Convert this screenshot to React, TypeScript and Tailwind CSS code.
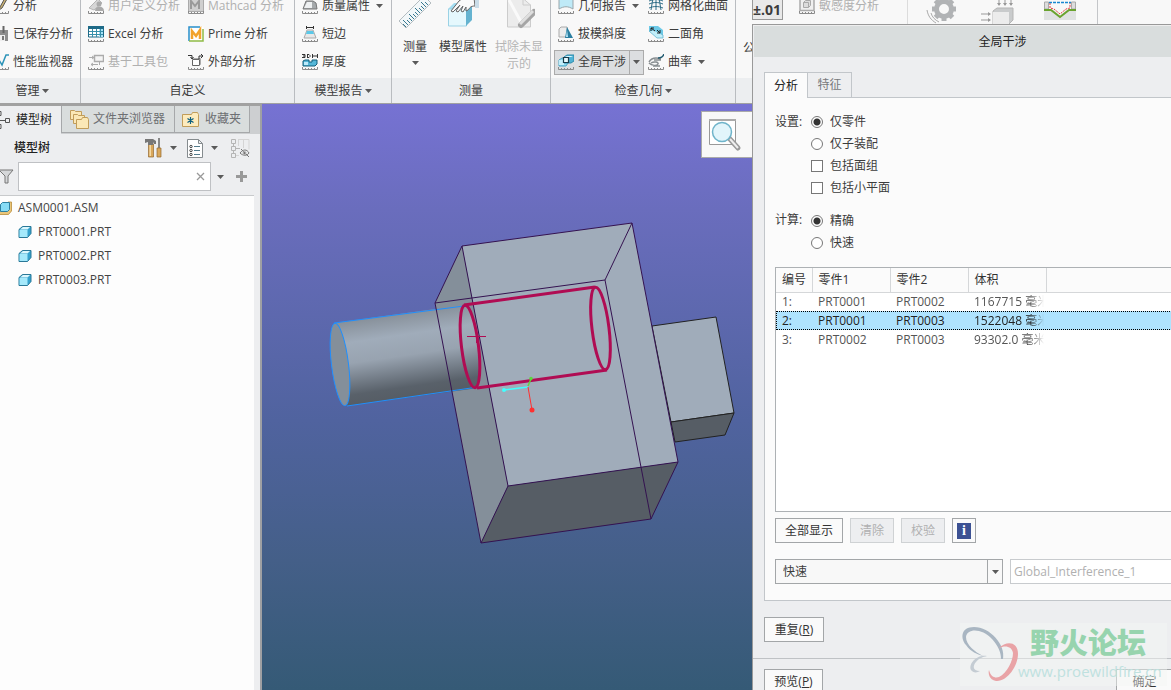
import type { ReactNode } from 'react'

type IconProps = { children: ReactNode; ruler?: boolean }

// 16x16 功能区图标，底部可带刻度尺
function RibbonIcon({ children, ruler = true }: IconProps) {
  return (
    <svg width="16" height="16" viewBox="0 0 16 16" fill="none" className="shrink-0">
      {children}
      {ruler && <path d="M.5 13v2.500h15V13M3.500 14v1M6.500 14v1M9.500 14v1M12.500 14v1" stroke="#8b8b8b" />}
    </svg>
  )
}

function Caret() {
  return (
    <svg width="7" height="4" viewBox="0 0 7 4" className="shrink-0"><path d="M0 0h7L3.500 4z" fill="#5a5a5a" /></svg>
  )
}

const icons = {
  run: <RibbonIcon><path d="M12 0L7 9l-1 3 3-2 5-9z" fill="#c8b070" stroke="#555" /></RibbonIcon>,
  saved: <RibbonIcon ruler={false}><path d="M1 4h14v11H1z" fill="#8d8d8d" /><path d="M4.500 0v7M10.500 0v7" stroke="#666" strokeWidth="2" /><path d="M5 9h7v6H5z" fill="#eee" /><path d="M9 10h2v4H9z" fill="#777" /></RibbonIcon>,
  monitor: <RibbonIcon><path d="M3 6h3l3 5 4-10h3" stroke="#2c93b8" strokeWidth="1.500" /></RibbonIcon>,
  user: <RibbonIcon><path d="M1 10L10 1l4 4-8 7z" fill="#d6d6d6" stroke="#b5b5b5" /><circle cx="11" cy="6" r="2.500" fill="#aaa" /><path d="M7 13c0-6 9-6 9 0z" fill="#aaa" /></RibbonIcon>,
  excel: <RibbonIcon><path d="M.5 1h15v10H.5z" fill="#fff" stroke="#1e6a87" /><path d="M0 0h16v3H0z" fill="#1e6a87" /><path d="M11 3h4v8h-4z" fill="#a8e2f6" /><path d="M4.500 3v8M8.500 3v8M12.500 3v8M1 5.500h14M1 8.500h14" stroke="#368faa" /></RibbonIcon>,
  toolkit: <RibbonIcon><path d="M6.500 1.500h9v6h-9z" fill="#f4f4f4" stroke="#ababab" strokeWidth="1.500" /><path d="M1 3.500h5M4 2l2 1.500L4 5M10 10.500H3M5 9l-2 1.500L5 12M11.500 8v3" stroke="#ababab" /></RibbonIcon>,
  mathcad: <RibbonIcon><path d="M.5.5h15v13H.5z" fill="#cfcfcf" stroke="#aaa" /><path d="M3 11V3l4 5 4-5v8" stroke="#999" strokeWidth="2" /></RibbonIcon>,
  prime: <RibbonIcon ruler={false}><path d="M.5.5h15v15H.5z" fill="#fff" /><path d="M1 15V1h11" stroke="#278fca" strokeWidth="1.500" /><path d="M1 15h14V3" stroke="#8fba46" strokeWidth="1.500" /><path d="M4 13V5l4 5 4-6v9" stroke="#f2a32c" strokeWidth="2.500" /></RibbonIcon>,
  external: <RibbonIcon><path d="M4.500 5.500h7v6h-7z" fill="#fff" stroke="#666" /><path d="M4.500 5.500l1-1h7v6l-1 1" stroke="#aaa" /><path d="M0 1.500h4v3M2.500 3l1.500 2 1.500-2M11 5V2h4M13 0l2 2-2 2" stroke="#333" /></RibbonIcon>,
  mass: <RibbonIcon><path d="M1 11L4 3h7l3 2 1 6z" fill="#a5a9ab" stroke="#777" /><path d="M2 10l3-6h5v6z" fill="#eef0f1" /></RibbonIcon>,
  edge: <RibbonIcon><path d="M5 4h6l3 8H2z" fill="#e8e8e8" stroke="#aaa" /><path d="M5 5h6l1 3H4z" fill="#5bc8e8" /><path d="M4.500 0v3M11.500 0v3M4 1.500h8" stroke="#333" /></RibbonIcon>,
  thickness: <RibbonIcon><path d="M1 7l2-1h4v2h3V6h5v4l-2 2H1z" fill="#55b7d8" stroke="#155e7a" /><path d="M2 8h4v3H2z" fill="#bdeafa" /><path d="M0 .5h3v3H0M1 2h2M5.500 0v4M5 .5h2l1 1v1l-1 1H5M10.500 0v4M15.500 0v4M10 2h5" stroke="#333" /></RibbonIcon>,
  geom: <RibbonIcon><path d="M1 0h14v11c-5-3-9-3-14 0z" fill="#bfeaf7" stroke="#9aa6ab" /></RibbonIcon>,
  draft: <RibbonIcon><path d="M1 11V3l2-2h6l1 10z" fill="#ececec" stroke="#aaa" /><path d="M9 1l6 11H7z" fill="#2a7ea0" /><path d="M9 4l1 7H8z" fill="#bdeafa" /></RibbonIcon>,
  interfere: <RibbonIcon><path d="M1 6l3-2h6v5l-2 3H1z" fill="#8cd8f0" stroke="#4aa6c6" /><path d="M6 3l3-2h7v6l-3 2H6z" fill="#4fb2d5" stroke="#2f8bab" /><path d="M7 3l2-1h6l-2 1z" fill="#d8f5fd" /><path d="M1 6h5v5H1z" fill="#c4eefa" /><path d="M5.500 3.500h5v5h-5z" fill="#e9fafe" stroke="#173a49" strokeWidth="1.200" /></RibbonIcon>,
  mesh: <RibbonIcon><path d="M1 3c5-2 9-2 14 0M1 6c5-2 9-2 14 0M1 10c5-2 9-2 14 0M5 0c-1 4-1 8-2 12M8 0v12M11 0c1 4 1 8 2 12" stroke="#2f6d87" /></RibbonIcon>,
  dihedral: <RibbonIcon><path d="M1 0h9l5 4v8l-5-6-9-1z" fill="#6cc9e7" /><path d="M1 5l5-1 9 5v3H9z" fill="#c2eef9" stroke="#55aeca" strokeWidth=".7" /><path d="M3 5V2h3M3 2l4 3M9 4l3 3V4M12 7H9" stroke="#222" /></RibbonIcon>,
  curvature: <RibbonIcon><path d="M1 8c3-5 9-4 12-3M1 9c3 3 8 3 9 1s-4-3-7-1M6 6h7M5 12h7" stroke="#878d90" strokeWidth="1.500" /><path d="M10 4c3 0 5-1 6-4" stroke="#205a70" strokeWidth="1.500" /></RibbonIcon>,
  sense: <RibbonIcon><path d="M1 .5h14v12H1z" fill="#f0f0f0" stroke="#aaa" strokeWidth="1.500" /><path d="M4.500 4.500h5v5h-5zM4.500 4.500l2-2h5v5l-2 2" fill="#ddd" stroke="#aaa" /></RibbonIcon>,
}

type ItemProps = { icon: ReactNode; label: string; disabled?: boolean; caret?: boolean }

function Item({ icon, label, disabled, caret }: ItemProps) {
  return (
    <button disabled={disabled} className="flex h-7 items-center gap-1 whitespace-nowrap text-[#3c3c3c] disabled:text-[#b0b0b0]">
      {icon}
      <span>{label}</span>
      {caret && <span className="ml-0.5"><Caret /></span>}
    </button>
  )
}

function Group({ title, caret, className, children }: { title: string; caret?: boolean; className: string; children: ReactNode }) {
  return (
    <section className={`flex shrink-0 flex-col border-r border-[#b9bcc0] ${className}`}>
      <div className="flex h-[78px] items-end overflow-hidden bg-[#f8f8f8] pb-0.5">{children}</div>
      <h2 className="flex flex-1 items-center justify-center gap-0.5 bg-[#eceef0]">
        {title}
        {caret && <Caret />}
      </h2>
    </section>
  )
}

function BigButton({ icon, lines, disabled, caret }: { icon: ReactNode; lines: string[]; disabled?: boolean; caret?: boolean }) {
  return (
    <button disabled={disabled} className="flex h-[76px] flex-col items-center whitespace-nowrap leading-[17px] disabled:text-[#b5b5b5]">
      {icon}
      <span className="mt-1.5">{lines[0]}</span>
      {lines[1] && <span>{lines[1]}</span>}
      {caret && <span className="mt-1.5"><Caret /></span>}
    </button>
  )
}

function Ribbon() {
  return (
    <header className="flex h-[104px] shrink-0 overflow-hidden border-b border-[#a1a1a1] bg-[linear-gradient(#f8f8f8_78px,#eceef0_78px)]">
      <Group title="管理" caret className="w-[81px] [&>h2]:pr-4">
        <div className="-ml-[7px] flex flex-col">
          <Item icon={icons.run} label="分析" />
          <Item icon={icons.saved} label="已保存分析" />
          <Item icon={icons.monitor} label="性能监视器" />
        </div>
      </Group>
      <Group title="自定义" className="w-[214px]">
        <div className="ml-[7px] flex w-[100px] flex-col">
          <Item icon={icons.user} label="用户定义分析" disabled />
          <Item icon={icons.excel} label="Excel 分析" />
          <Item icon={icons.toolkit} label="基于工具包" disabled />
        </div>
        <div className="flex flex-col">
          <Item icon={icons.mathcad} label="Mathcad 分析" disabled />
          <Item icon={icons.prime} label="Prime 分析" />
          <Item icon={icons.external} label="外部分析" />
        </div>
      </Group>
      <Group title="模型报告" caret className="w-[97px]">
        <div className="ml-[7px] flex flex-col">
          <Item icon={icons.mass} label="质量属性" caret />
          <Item icon={icons.edge} label="短边" />
          <Item icon={icons.thickness} label="厚度" />
        </div>
      </Group>
      <Group title="测量" className="w-[159px]">
        <div className="flex gap-2 pl-[7px]">
          <BigButton
            caret
            lines={['测量']}
            icon={
              <svg width="32" height="32" viewBox="0 0 32 32" fill="none">
                <path d="M0 21L25-4l7 7L7 28z" fill="#f2f7f9" stroke="#b4bcc0" />
                <path d="M7 27l-3-3M9 25l-5-5M11 23l-3-3M13 21l-3-3M15 19l-5-5M17 17l-3-3M19 15l-3-3M21 13l-5-5M23 11l-3-3M25 9l-3-3M27 7l-5-5M29 5l-3-3" stroke="#38788f" />
              </svg>
            }
          />
          <BigButton
            lines={['模型属性']}
            icon={
              <svg width="32" height="32" viewBox="0 0 32 32" fill="none">
                <path d="M1 9l6-6h18l-7 6z" fill="#a3dcf0" />
                <path d="M1.500 9h18v17h-18z" fill="#e5f8fd" stroke="#9bd2e5" />
                <path d="M19 9l6-6v17l-6 6z" fill="#65b3d0" />
                <path d="M4 11l8-10 4-3h11l1 8c-5 0-5 2-7 4l-2 1 0-4-3 5-2-1 2-5-5 6-2-1 4-6-7 7z" fill="#fafafa" stroke="#666" />
                <path d="M28-1h4v9h-4z" fill="#c9dce8" />
              </svg>
            }
          />
          <BigButton
            disabled
            lines={['拭除未显', '示的']}
            icon={
              <svg width="32" height="32" viewBox="0 0 32 32" fill="none">
                <path d="M4.500-2h15l8 7v22h-23z" fill="#ececec" stroke="#ccc" />
                <path d="M6 0l12 22" stroke="#fafafa" strokeWidth="3" />
                <path d="M20-2v7h8" stroke="#ccc" />
                <path d="M18 25L31 12" stroke="#a5a5a5" strokeWidth="6" strokeLinecap="round" />
                <path d="M17 24L30 11" stroke="#dedede" strokeWidth="3" />
              </svg>
            }
          />
        </div>
      </Group>
      <Group title="检查几何" caret className="w-[185px]">
        <div className="ml-[3px] flex w-[94px] flex-col">
          <div className="pl-1"><Item icon={icons.geom} label="几何报告" caret /></div>
          <div className="pl-1"><Item icon={icons.draft} label="拔模斜度" /></div>
          <div className="flex h-7 items-center">
            <div className="flex h-[25px] w-[90px] items-center border border-[#ababab] bg-[#dcdee0]">
              <button className="flex h-full items-center gap-1 border-r border-[#ababab] pr-[3px] pl-[3px] whitespace-nowrap">
                {icons.interfere}
                全局干涉
              </button>
              <button aria-label="全局干涉选项" className="flex flex-1 justify-center"><Caret /></button>
            </div>
          </div>
        </div>
        <div className="flex flex-col">
          <Item icon={icons.mesh} label="网格化曲面" />
          <Item icon={icons.dihedral} label="二面角" />
          <Item icon={icons.curvature} label="曲率" caret />
        </div>
      </Group>
      <div className="flex h-[78px] w-[362px] shrink-0 gap-2 border-r border-[#c4c6c9] pl-[7px]">
        <button className="flex w-12 flex-col items-center whitespace-nowrap">
          <span className="flex h-5 w-[31px] items-center justify-center border border-t-0 border-[#999] bg-[#e9e9e9] text-sm font-bold">±.01</span>
          <span className="mt-5">公差分析</span>
        </button>
        <div className="-mt-2 w-[109px] border-r border-[#dcdcdc] pr-4">
          <Item icon={icons.sense} label="敏感度分析" disabled />
        </div>
        <svg width="156" height="24" viewBox="916 0 156 24" fill="none" className="ml-2 overflow-visible">
          <g transform="translate(-8 0)">
            <circle cx="944" cy="9" r="7.500" stroke="#b1b3b5" strokeWidth="5" />
            <path d="M944-3v4M944 17v4M932 9h4M952 9h4M935.500.5l3 3M949.500 14.500l3 3M952.500.5l-3 3M938.500 14.500l-3 3" stroke="#b1b3b5" strokeWidth="5" />
            <path d="M927 10c1 6 4 10 9 13M931 13c1 4 4 7 8 9" stroke="#aaa" />
            <path d="M993 11l4-3h16v12l-4 4h-16z" fill="#c9cbcc" stroke="#b5b5b5" />
            <path d="M993 12h16v12h-16z" fill="#ececec" />
            <path d="M999 0v5M1005 0v5M1011 0v5M981 14h9M981 20h9" stroke="#999" />
            <path d="M997 3h4l-2 3zM1003 3h4l-2 3zM1009 3h4l-2 3zM988 12v4l3-2zM988 18v4l3-2z" fill="#999" />
            <path d="M1044 2h5v8h5l6 6 6-6h5V2h5v18h-32z" fill="#e0e2e2" />
            <path d="M1044.500 2h4v7h-4zM1071.500 2h4v7h-4z" fill="#ddd" stroke="#aaa" />
            <path d="M1044 10h7l9 7 9-7h7" stroke="#6aa32f" strokeWidth="2" />
            <path d="M1050 3v5l4 1 6 5 6-5 4-1V3" stroke="#e23b3b" strokeDasharray="2 1" />
            <path d="M1049 2.500h22" stroke="#1a87d0" strokeWidth="1.500" strokeDasharray="3 1" />
          </g>
        </svg>
      </div>
    </header>
  )
}

function PartIcon({ assembly }: { assembly?: boolean }) {
  return (
    <svg width="14" height="14" viewBox="0 0 14 14" className="shrink-0">
      {assembly && <path d="M0 4h10V1h3.500v9l-3 3.500H0z" fill="#eac67a" stroke="#b98d3a" strokeWidth=".8" />}
      {assembly ? (
        <path d="M2.500 3.500l2-2h7v7l-2 2h-7z" fill="#87dcf5" stroke="#2c7fa0" />
      ) : (
        <>
          <path d="M1 4.500L4.500 1.500H13v7L9.500 12.500H1z" fill="#35a2cd" stroke="#2b7897" />
          <path d="M1.500 5h8v7h-8z" fill="#a5e9fb" />
          <path d="M2 4.500l3-2.500h7L9.500 4.500z" fill="#dbf7fd" />
        </>
      )}
    </svg>
  )
}

const parts = ['PRT0001.PRT', 'PRT0002.PRT', 'PRT0003.PRT']

function FolderIcon({ stack }: { stack?: boolean }) {
  if (stack) {
    return (
      <svg width="19" height="19" viewBox="0 0 19 19" fill="#fbe8b6" stroke="#c19d5a">
        <path d="M.5.5h4l1 1h6v8H.5z" /><path d="M3.500 4.500h4l1 1h6v8h-11z" /><path d="M6.500 9.500h5l1-2h5l1 2v9h-12z" />
      </svg>
    )
  }
  return (
    <svg width="17" height="15" viewBox="0 0 17 15">
      <path d="M.5 2.500h9l1-2h5l1 2v12H.5z" fill="#fdebbd" stroke="#c19d5a" />
      <path d="M8.500 5v7M5.500 6.500l6 4M5.500 10.500l6-4" stroke="#0b5f80" strokeWidth="1.200" />
    </svg>
  )
}

function ModelTree() {
  return (
    <aside className="flex w-[262px] shrink-0 flex-col border-r-2 border-[#9fa0a3] bg-[#edeef0]">
      <div role="tablist" className="flex h-[30px] shrink-0 border-t-2 border-[#a1a1a1] bg-[#cdcfd1] text-[#6d6f72]">
        <button role="tab" aria-selected="true" className="flex w-[61px] items-center gap-1.5 overflow-hidden bg-[#edeef0] text-[#222]">
          <svg width="10" height="18" viewBox="0 0 10 18" fill="none" stroke="#555" className="shrink-0"><path d="M-2 .5h3v4h-3M-2 13.500h3v4h-3M5.500 7.500h4v4h-4zM0 9.500h5" /></svg>
          <span className="whitespace-nowrap">模型树</span>
        </button>
        <button role="tab" aria-selected="false" className="flex h-[27px] w-[113px] items-center gap-1 border-b border-l border-[#a6a8aa] bg-[#d9dddd] pl-2">
          <FolderIcon stack />
          文件夹浏览器
        </button>
        <button role="tab" aria-selected="false" className="flex h-[27px] w-[76px] items-center gap-1.5 border-x border-b border-[#a6a8aa] bg-[#d9dddd] pl-[7px]">
          <FolderIcon />
          收藏夹
        </button>
      </div>
      <div className="flex h-7 shrink-0 items-center pr-2.5 pl-3.5">
        <h2 className="flex-1 font-medium text-[#222]">模型树</h2>
        <button aria-label="设置" className="flex items-center gap-2">
          <svg width="17" height="20" viewBox="0 0 17 20">
            <path d="M3.500 6h5v13h-5z" fill="#d9a75a" stroke="#94692f" strokeWidth=".7" /><path d="M4.500 6h1.500v12h-1.500z" fill="#f4d9a5" /><path d="M0 1h8l3 2v3H9L8 4v3H3V4L0 5z" fill="#777" />
            <path d="M13 0h2v10h-2z" fill="#888" /><path d="M12 10h4v9h-4z" fill="#d9a75a" stroke="#94692f" strokeWidth=".7" />
          </svg>
          <Caret />
        </button>
        <button aria-label="显示" className="ml-2.5 flex items-center gap-2">
          <svg width="16" height="19" viewBox="0 0 16 19" fill="none">
            <path d="M.5.5h11l4 4v14H.5zM11.500.5v4h4" fill="#fff" stroke="#858b8e" />
            <path d="M7 7.500h6M7 11.500h6M7 15.500h6" stroke="#557c8c" />
            <circle cx="4" cy="7.500" r="1.200" stroke="#444" /><circle cx="4" cy="11.500" r="1.200" stroke="#444" /><circle cx="4" cy="15.500" r="1.200" stroke="#444" />
          </svg>
          <Caret />
        </button>
        <button aria-label="隐藏项" className="ml-3">
          <svg width="20" height="20" viewBox="0 0 20 20" fill="none" stroke="#b5b5b5">
            <path d="M1.500 1.500h4v4h-4zM1.500 8.500h4v4h-4zM1.500 15.500h4v4h-4zM3.500 6v2M3.500 13v2M6 10.500h4" /><path d="M8 1.500h11v10M13.500 2v8M8.500 2v6M6 17.500h3" stroke="#d5d5d5" />
            <path d="M10 15c3-4 7-4 9 0-2 3-6 3-9 0zM11 11l8 8" stroke="#777" /><circle cx="14.500" cy="15" r="1.500" fill="#777" />
          </svg>
        </button>
      </div>
      <div className="flex shrink-0 items-center pb-1">
        <svg width="14" height="15" viewBox="0 0 14 15" className="mr-1 shrink-0"><path d="M-1 1h14L8 7v7H5V7z" fill="#d5d7d9" stroke="#777" /></svg>
        <div className="flex h-[29px] w-[193px] items-center border border-[#bfc1c4] bg-white pr-[5px]">
          <input aria-label="搜索" className="h-full min-w-0 flex-1 px-1 outline-none" />
          <button aria-label="清除搜索">
            <svg width="9" height="9" viewBox="0 0 9 9" stroke="#999" strokeWidth="1.300"><path d="M1 1l7 7M8 1L1 8" /></svg>
          </button>
        </div>
        <button aria-label="搜索选项" className="ml-1.5"><Caret /></button>
        <button aria-label="添加" className="ml-3">
          <svg width="11" height="11" viewBox="0 0 11 11" stroke="#999" strokeWidth="3"><path d="M0 5.500h11M5.500 0v11" /></svg>
        </button>
      </div>
      <ul className="mr-1.5 flex-1 border-t border-[#c8cacc] bg-[#fdfdfd] text-[#444]">
        <li className="-ml-0.5 flex h-6 items-center gap-1.5"><PartIcon assembly />ASM0001.ASM</li>
        {parts.map((name) => (
          <li key={name} className="flex h-6 items-center gap-1.5 pl-[18px]"><PartIcon />{name}</li>
        ))}
      </ul>
    </aside>
  )
}

function Scene() {
  return (
    <svg width="490" height="586" viewBox="262 104 490 586" fill="none" strokeWidth="1" aria-label="装配模型">
      <defs>
        <linearGradient id="cyl" gradientUnits="userSpaceOnUse" x1="395" y1="315" x2="407" y2="397">
          <stop offset="0" stopColor="#88919b" />
          <stop offset=".25" stopColor="#a0acba" />
          <stop offset=".5" stopColor="#98a3b0" />
          <stop offset=".88" stopColor="#59616a" />
          <stop offset="1" stopColor="#565d65" />
        </linearGradient>
      </defs>
      {/* 小方块 */}
      <path d="M652 326L716 317 734 413 671 422z" fill="#a0acba" stroke="#222" />
      <path d="M671 422L734 413 725 435 675 442z" fill="#565d65" stroke="#222" />
      {/* 大方块 */}
      <path d="M462 246L632 223 678 462 508 486z" fill="#a0acba" />
      <path d="M462 246L435 303 481 543 508 486z" fill="#848f9a" />
      <path d="M508 486L678 462 651 519 481 543z" fill="#565d65" />
      {/* 圆柱 */}
      <path d="M334 323L464 305 478 388 347 406z" fill="url(#cyl)" />
      <ellipse cx="340" cy="364.500" rx="8.500" ry="41.500" transform="rotate(-7 340 364.500)" fill="#848f9a" stroke="#1e8fff" />
      <path d="M334 323L464 306M347 406L478 387" stroke="#1e8fff" />
      <ellipse cx="470" cy="346.500" rx="9" ry="41.500" transform="rotate(-7 470 346.500)" fill="url(#cyl)" />
      <path d="M462 246L632 223 678 462 508 486zM435 303L462 246M435 303L605 280 632 223M435 303L481 543 508 486M605 280L651 519 678 462M481 543L651 519" stroke="#341250" />
      {/* 干涉体积 */}
      <g stroke="#b00c53" strokeWidth="3">
        <ellipse cx="470" cy="346.500" rx="8.500" ry="41.500" transform="rotate(-7 470 346.500)" />
        <ellipse cx="600.500" cy="328.500" rx="8.500" ry="41.500" transform="rotate(-7 600.500 328.500)" />
        <path d="M464 305L595 287M477 388L607 370" />
      </g>
      <path d="M467 336.500h19M476.500 330v13" stroke="#b00c53" />
      {/* 坐标轴 */}
      <path d="M528 387l-24 3" stroke="#40ffff" strokeWidth="1.500" />
      <circle cx="504" cy="390" r="2" fill="#40ffff" />
      <path d="M528 387l4 23" stroke="#ff3030" />
      <circle cx="532" cy="410" r="2.500" fill="#ff3030" />
      <path d="M528 386l3-7" stroke="#5cd63c" strokeWidth="1.500" />
      <circle cx="531" cy="378.500" r="1.800" fill="#5cd63c" />
    </svg>
  )
}

const results = [
  { no: '1:', a: 'PRT0001', b: 'PRT0002', volume: '1167715 毫米' },
  { no: '2:', a: 'PRT0001', b: 'PRT0003', volume: '1522048 毫米' },
  { no: '3:', a: 'PRT0002', b: 'PRT0003', volume: '93302.0 毫米' },
]

function Choice({ type, name, label, checked }: { type: 'radio' | 'checkbox'; name: string; label: string; checked?: boolean }) {
  return (
    <label className="flex h-[22px] items-center gap-[7px]">
      <input
        type={type}
        name={name}
        defaultChecked={checked}
        className={`size-3 appearance-none border border-[#777] bg-white ${
          type === 'radio' ? 'rounded-full checked:bg-[radial-gradient(#333_3px,white_4px)]' : ''
        }`}
      />
      {label}
    </label>
  )
}

const btn = 'h-[25px] border border-[#a3a6a8] bg-[#fafafa] text-[#333] disabled:border-[#cfd2d4] disabled:bg-[#edeef0] disabled:text-[#b0b0b0]'

function InterferenceDialog() {
  return (
    <section role="dialog" aria-label="全局干涉" className="absolute top-6 left-[752px] flex w-[500px] flex-col border border-[#999] bg-[#edeef0]">
      <h1 className="ml-px flex h-8 items-center justify-center border-t border-[#eee] bg-[#d9dddd] text-[#222]">全局干涉</h1>
      <div className="px-[11px] pt-[15px]">
        <div role="tablist" className="flex">
          <button role="tab" aria-selected="true" className="relative z-10 -mb-px h-[26px] w-11 border border-b-0 border-[#c2c6ca] bg-[#fbfbfb] text-[#222]">分析</button>
          <button role="tab" aria-selected="false" className="h-[25px] w-11 border border-b-0 border-l-0 border-[#c2c6ca] text-[#77797c]">特征</button>
        </div>
        <div className="border border-[#c2c6ca] bg-[#fbfbfb] px-2.5 pt-[13px] pb-4">
          <fieldset className="flex">
            <legend className="float-left w-9 leading-[22px]">设置:</legend>
            <div>
              <Choice type="radio" name="setup" label="仅零件" checked />
              <Choice type="radio" name="setup" label="仅子装配" />
              <Choice type="checkbox" name="quilt" label="包括面组" />
              <Choice type="checkbox" name="facet" label="包括小平面" />
            </div>
          </fieldset>
          <fieldset className="mt-[11px] flex">
            <legend className="float-left w-9 leading-[20px]">计算:</legend>
            <div>
              <Choice type="radio" name="compute" label="精确" checked />
              <Choice type="radio" name="compute" label="快速" />
            </div>
          </fieldset>
          <div className="mt-[13px] h-[245px] border border-[#adb1b4] bg-white">
            <table className="w-full table-fixed border-collapse text-left text-[#555]">
              <thead>
                <tr className="h-6 border-b border-[#d5d7d9] bg-[#fbfbfb] text-[#333]">
                  <th className="w-9 border-r border-[#d5d7d9] pl-1.5 font-normal whitespace-nowrap">编号</th>
                  <th className="w-[78px] border-r border-[#d5d7d9] pl-1.5 font-normal">零件1</th>
                  <th className="w-[78px] border-r border-[#d5d7d9] pl-1.5 font-normal">零件2</th>
                  <th className="w-[78px] border-r border-[#d5d7d9] pl-1.5 font-normal">体积</th>
                  <th />
                </tr>
              </thead>
              <tbody>
                {results.map((row, i) => (
                  <tr key={row.no} className={`h-[19px] ${i === 1 ? 'bg-[#afe3fe] text-[#222] outline-1 -outline-offset-1 outline-dotted outline-black' : ''}`}>
                    <td className="pl-1.5">{row.no}</td>
                    <td className="pl-1.5">{row.a}</td>
                    <td className="pl-1.5">{row.b}</td>
                    <td className="pl-1.5">
                      <span className="block w-[70px] overflow-hidden whitespace-nowrap [mask-image:linear-gradient(to_right,black_56px,transparent_70px)]">{row.volume}</span>
                    </td>
                    <td />
                  </tr>
                ))}
              </tbody>
            </table>
          </div>
          <div className="mt-1.5 flex gap-[7px]">
            <button className={`${btn} w-[68px]`}>全部显示</button>
            <button disabled className={`${btn} w-11`}>清除</button>
            <button disabled className={`${btn} w-11`}>校验</button>
            <button aria-label="信息" className={`${btn} flex w-6 items-center justify-center`}>
              <span className="flex h-4 w-3.5 items-center justify-center bg-[#3c5193] font-['Liberation_Serif',serif] text-sm font-bold text-white">i</span>
            </button>
          </div>
          <div className="mt-4 flex gap-[7px]">
            <div className="relative h-[25px] w-[228px]">
              <select aria-label="类型" className="h-full w-full appearance-none border border-[#a3a6a8] bg-[#f8f8f8] px-[7px]">
                <option>快速</option>
              </select>
              <span className="pointer-events-none absolute inset-y-0 right-0 flex w-4 items-center justify-center border-l border-[#a3a6a8]"><Caret /></span>
            </div>
            <input aria-label="名称" disabled defaultValue="Global_Interference_1" className="h-[25px] flex-1 border border-[#c8cbce] bg-white px-[3px] text-[#b0b0b0]" />
          </div>
        </div>
        <button className={`${btn} mt-4 w-[60px]`}>重复(<u>R</u>)</button>
      </div>
      <footer className="mt-4 flex justify-between border-t border-[#bfc2c5] px-[11px] py-2.5">
        <button className={`${btn} w-[59px]`}>预览(<u>P</u>)</button>
        <button className={`${btn} mr-[67px] w-[57px]`}>确定</button>
      </footer>
    </section>
  )
}

function Watermark() {
  return (
    <div className="pointer-events-none absolute right-1 bottom-1 flex h-[63px] w-[207px] bg-[#f5f7f5]/45">
      <svg width="58" height="63" viewBox="0 0 58 63" fill="none" className="shrink-0">
        <path d="M43 36C46 22 30 4 14 4 1 4 0 15 6 22c5 7 11 9 17 11C15 29 6 22 6 14 7 5 22 5 32 16c6 7 9 13 9 20z" fill="#a9b6c2" />
        <path d="M27 33C17 31 8 41 11 47c2 3 6 3 9 1-8 0-7-6-4-9 3-4 7-5 11-6z" fill="#c4ccd3" />
        <path d="M39 25C46 18 58 18 58 31 58 43 47 59 36 58 29 57 28 50 29 47c2 8 7 8 10 7 8-4 14-16 14-24C52 23 45 22 39 25z" fill="#e9a3a6" />
      </svg>
      <div className="flex flex-col whitespace-nowrap">
        <span className="ml-3 h-[34px] text-[29px] leading-[40px] font-black text-[#97d4ae]">野火论坛</span>
        <span className="text-[15px] leading-[28px] text-[#bfe1df]">www.proewildfire.cn</span>
      </div>
    </div>
  )
}

export default function App() {
  return (
    <div className="relative flex h-screen flex-col overflow-hidden bg-[#edeef0] font-['Open_Sans','Noto_Sans_CJK_SC',sans-serif] text-xs text-[#3c3c3c]">
      <Ribbon />
      <div className="flex min-h-0 flex-1">
        <ModelTree />
        <main className="relative min-w-0 flex-1 overflow-hidden bg-[linear-gradient(#7672d3,#6a6dbd_18%,#50639f_54%,#445f88_78%,#355a76)]">
          <Scene />
          <div className="absolute top-[7px] left-[439px] flex h-[47px] w-24 items-center gap-2 border border-[#aaa] bg-[#f8f8f8] pl-1.5">
            <button aria-label="放大">
              <svg width="34" height="34" viewBox="0 0 34 34" fill="none">
                <path d="M1.500 1.500h26v25h-26z" fill="#fff" stroke="#999" /><path d="M1 1h27v2H1z" fill="#aaa" />
                <path d="M21 20l9 10" stroke="#999" strokeWidth="5" strokeLinecap="round" /><path d="M22 21l8 9" stroke="#eee" strokeWidth="2" />
                <circle cx="14" cy="14" r="9.500" fill="#e2f5fb" stroke="#6fb4ca" strokeWidth="1.500" />
              </svg>
            </button>
          </div>
        </main>
      </div>
      <InterferenceDialog />
      <Watermark />
    </div>
  )
}
